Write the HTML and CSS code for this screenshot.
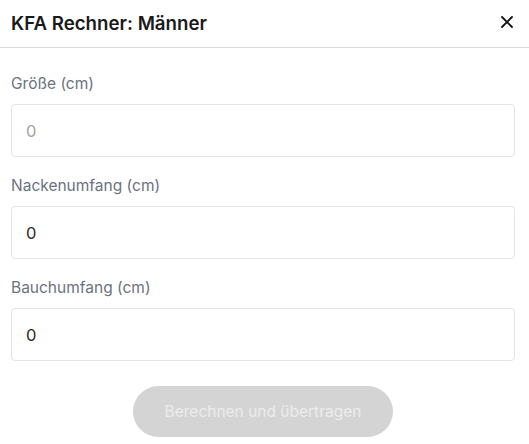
FILE: index.html
```html
<!DOCTYPE html>
<html lang="de">
<head>
<meta charset="utf-8">
<link rel="stylesheet" href="styles.css">
</head>
<body>
<div class="modal">
  <header class="modal-header">
    <h2 class="title">KFA Rechner: Männer</h2>
    <button class="close" aria-label="Schließen">
      <svg width="12" height="12" viewBox="0 0 12 12"><path d="M1 1L11 11M11 1L1 11" stroke="#111" stroke-width="1.8" stroke-linecap="round"/></svg>
    </button>
  </header>
  <div class="modal-body">
    <label class="field">
      <span class="label">Größe (cm)</span>
      <input class="input" type="text" placeholder="0">
    </label>
    <label class="field">
      <span class="label">Nackenumfang (cm)</span>
      <input class="input" type="text" value="0">
    </label>
    <label class="field">
      <span class="label">Bauchumfang (cm)</span>
      <input class="input" type="text" value="0">
    </label>
    <div class="actions">
      <button class="submit" disabled>Berechnen und übertragen</button>
    </div>
  </div>
</div>
</body>
</html>
```
FILE: styles.css
```css
* { box-sizing: border-box; }
html, body { margin: 0; padding: 0; background: #fff; }
body { font-family: Inter, "Noto Sans", sans-serif; color: #1f1f1f; }
.modal { width: 529px; }
.modal-header {
  height: 48px;
  border-bottom: 1px solid #d9d9dd;
  display: flex;
  align-items: center;
  justify-content: space-between;
  padding: 0 16px 0 11px;
}
.title { margin: 0; font-size: 18.7px; font-weight: 600; color: #1a1a1a; letter-spacing: 0; }
.close { border: 0; background: none; padding: 0; width: 12px; height: 12px; display: flex; cursor: pointer; margin-top: -4px; }
.modal-body { padding: 26px 14px 0 11px; display: flex; flex-direction: column; }
.field { display: flex; flex-direction: column; gap: 10px; margin-bottom: 19px; }
.label { font-size: 15.5px; line-height: 20px; color: #6b7280; }
.input {
  height: 53px;
  border: 1px solid #e4e4e4;
  border-radius: 4px;
  padding: 0 14px;
  font-family: inherit;
  font-size: 16.5px;
  color: #2a2a2a;
  outline: none;
}
.input::placeholder { color: #a3a3a3; }
.actions { display: flex; justify-content: center; margin-top: 6px; }
.submit {
  width: 260px; height: 51px;
  border: 0; border-radius: 26px;
  background: #d4d4d4; color: #ececec;
  font-family: inherit; font-size: 15.5px;
}
```
